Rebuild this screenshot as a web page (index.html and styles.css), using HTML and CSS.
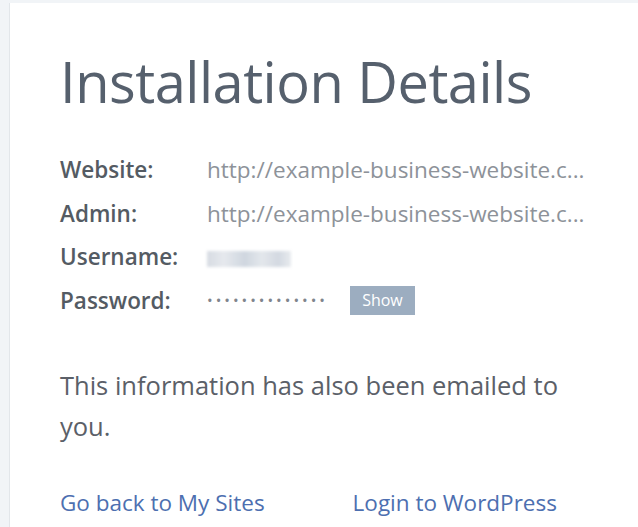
FILE: index.html
```html
<!DOCTYPE html>
<html>
<head>
<meta charset="utf-8">
<link rel="stylesheet" href="styles.css">
</head>
<body>
<div class="card">
  <h1 class="title">Installation Details</h1>
  <div class="details">
    <div class="label">Website:</div>
    <div class="value">http://example-business-website.c...</div>
    <div class="label">Admin:</div>
    <div class="value">http://example-business-website.c...</div>
    <div class="label">Username:</div>
    <div class="value"><span class="blur"></span></div>
    <div class="label">Password:</div>
    <div class="value pw"><span class="dots">••••••••••••••</span><button class="show">Show</button></div>
  </div>
  <p class="note">This information has also been emailed to you.</p>
  <div class="links">
    <a class="link" href="#">Go back to My Sites</a>
    <a class="link" href="#">Login to WordPress</a>
  </div>
</div>
</body>
</html>
```
FILE: styles.css
```css
html, body {
  margin: 0;
  padding: 0;
  height: 100%;
}
body {
  background: #f1f4f7;
  font-family: "Open Sans", "Liberation Sans", sans-serif;
  padding: 3px 0 0 9px;
  box-sizing: border-box;
  overflow: hidden;
}
.card {
  background: #ffffff;
  border-left: 1px solid #e2e6ea;
  height: 100%;
  padding: 40px 0 0 50px;
  box-sizing: border-box;
}
.title {
  margin: 0;
  font-weight: 400;
  font-size: 56px;
  color: #56606d;
  line-height: 76px;
  letter-spacing: -0.5px;
}
.details {
  display: grid;
  grid-template-columns: 147px 1fr;
  grid-auto-rows: 43.5px;
  align-items: center;
  margin-top: 29px;
}
.label {
  font-weight: 600;
  font-size: 22.5px;
  color: #545b63;
}
.value {
  font-size: 22.5px;
  color: #8d9299;
  white-space: nowrap;
}
.blur {
  display: inline-block;
  width: 84px;
  height: 16px;
  background: linear-gradient(90deg, #d6dbe2, #e6e9ee 20%, #cfd6df 45%, #e3e7ec 65%, #d3d9e1 85%, #e8ebef);
  filter: blur(1.5px);
  vertical-align: middle;
}
.pw {
  display: flex;
  align-items: center;
}
.dots {
  font-size: 15px;
  letter-spacing: 3px;
  color: #7f858d;
}
.show {
  margin-left: 22px;
  background: #9cadc0;
  color: #ffffff;
  border: 0;
  font-family: "Open Sans", "Liberation Sans", sans-serif;
  font-size: 16px;
  padding: 0 10px;
  height: 29px;
  width: 65px;
}
.note {
  margin: 43px 0 0;
  font-size: 25.5px;
  line-height: 41px;
  color: #5b6068;
  max-width: 540px;
}
.links {
  display: flex;
  gap: 88px;
  margin-top: 41px;
}
.link {
  font-size: 22.5px;
  line-height: 30px;
  color: #4d6fb0;
  text-decoration: none;
}
```
